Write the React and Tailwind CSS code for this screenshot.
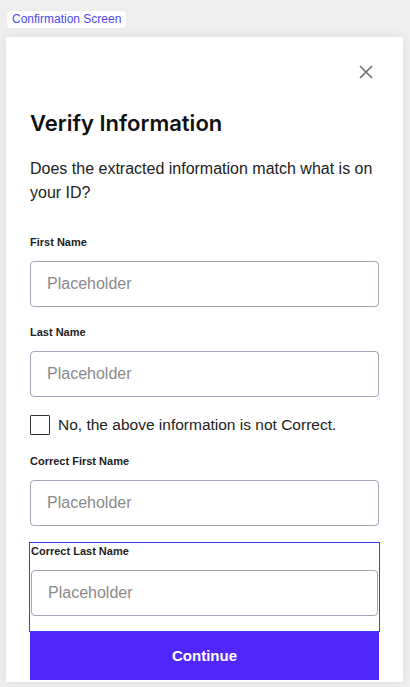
import React, { useState } from "react";

const Field = ({ label }) => (
    <div>
        <label className="block text-[11px] font-bold text-[#222] leading-4 font-['Liberation_Sans',sans-serif]">
            {label}
        </label>
        <input
            type="text"
            placeholder="Placeholder"
            className="mt-[11px] w-full h-[46px] rounded-[4px] border border-[#a3a3b5] px-4 text-[16px] font-['Liberation_Sans',sans-serif] placeholder:text-[#8a8a8a] outline-none"
        />
    </div>
);

export default function App() {
    const [notCorrect, setNotCorrect] = useState(false);

    return (
        <div className="min-h-[687px] bg-[#efefef] pt-[11px] font-['Liberation_Sans',sans-serif]">
            <div className="ml-[7px] w-fit rounded-[4px] bg-white px-[5px] h-[17px] leading-[17px] text-[12px] text-[#4a4af2] shadow-[0_0_3px_rgba(0,0,0,0.04)]">
                Confirmation Screen
            </div>

            <div className="ml-[6px] mr-[7px] mt-[9px] bg-white px-6 pb-[2px] shadow-[0_0_12px_rgba(0,0,0,0.08)]">
                <div className="flex justify-end pt-[26px] pr-[4px]">
                    <button className="text-[#6b6b7b]">
                        <svg width="18" height="18" viewBox="0 0 18 18" fill="none" stroke="currentColor" strokeWidth="1.6">
                            <path d="M3 3L15 15M15 3L3 15" />
                        </svg>
                    </button>
                </div>

                <h2 className="mt-[28px] text-[22px] leading-7 font-semibold text-[#111] font-['Inter',sans-serif]">
                    Verify Information
                </h2>
                <p className="mt-[20px] text-[16px] leading-6 text-[#222]">
                    Does the extracted information match what is on your ID?
                </p>

                <div className="mt-[29px]">
                    <Field label="First Name" />
                </div>
                <div className="mt-[17px]">
                    <Field label="Last Name" />
                </div>

                <label className="mt-[16px] flex items-center gap-2 cursor-pointer">
                    <input
                        type="checkbox"
                        checked={notCorrect}
                        onChange={(e) => setNotCorrect(e.target.checked)}
                        className="appearance-none w-[20px] h-[20px] border border-[#333] rounded-[1px] bg-white"
                    />
                    <span className="text-[15.5px] text-[#222]">No, the above information is not Correct.</span>
                </label>

                <div className="mt-[17px]">
                    <Field label="Correct First Name" />
                </div>

                <div className="mt-[16px] -mx-px border border-[#3b3bf5] pb-[15px]">
                    <div className="px-px">
                        <Field label="Correct Last Name" />
                    </div>
                </div>

                <button className="w-full h-[48px] bg-[#4f27fb] text-white text-[15px] font-bold">
                    Continue
                </button>
            </div>
        </div>
    );
}
